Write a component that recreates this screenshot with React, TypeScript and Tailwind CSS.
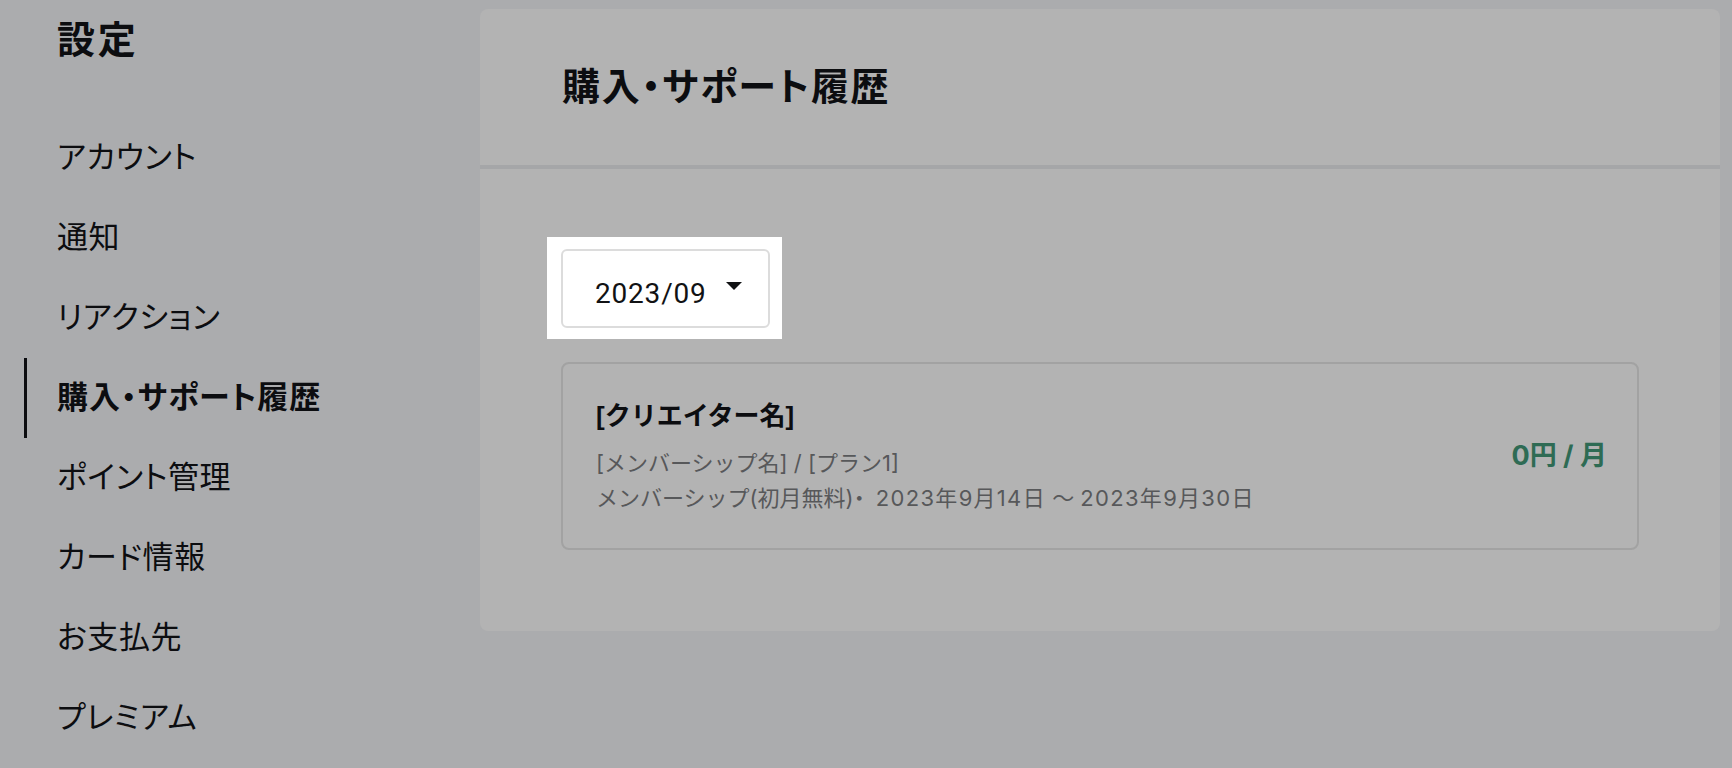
const menuItems = [
  'アカウント',
  '通知',
  'リアクション',
  '購入・サポート履歴',
  'ポイント管理',
  'カード情報',
  'お支払先',
  'プレミアム',
];

const activeItem = '購入・サポート履歴';

function Sidebar() {
  return (
    <aside className="w-[480px] shrink-0 pl-[24px]">
      <div className="flex h-[79px] items-center pl-[33px] text-[38px] font-bold leading-none tracking-[0.07em] text-[#0c0d10] [font-feature-settings:'palt']">
        設定
      </div>
      <nav className="mt-[39px] flex flex-col">
        {menuItems.map((item) => (
          <a
            key={item}
            href="#"
            className={
              item === activeItem
                ? "flex h-[80px] items-center border-l-[3px] border-[#0c0d10] pl-[30px] pt-[1px] text-[31px] font-bold tracking-[1px] text-[#0c0d10] [font-feature-settings:'palt']"
                : "flex h-[80px] items-center border-l-[3px] border-transparent pl-[30px] pt-[1px] text-[31px] tracking-[0.6px] text-[#0c0d10] [font-feature-settings:'palt']"
            }
          >
            {item}
          </a>
        ))}
      </nav>
    </aside>
  );
}

function MonthSelect() {
  return (
    <div className="-mb-[11px] -ml-[14px] -mt-[12px] w-fit bg-white pb-[11px] pl-[14px] pr-[12px] pt-[12px]">
      <button className="flex h-[79px] w-[209px] items-start rounded-[6px] border-2 border-[#dcdcdc] bg-white pl-[32px] pt-[29px]">
        <span className="font-['Roboto',sans-serif] text-[28px] leading-[28px] tracking-[0.8px] text-[#111214]">2023/09</span>
        <svg className="ml-[19px] mt-[2px]" width="16" height="8" viewBox="0 0 16 8">
          <path d="M0 0 H16 L8 8 Z" fill="#111214" />
        </svg>
      </button>
    </div>
  );
}

function HistoryCard() {
  return (
    <div className="mt-[34px] flex h-[188px] items-center justify-between rounded-[8px] border-2 border-[#a2a2a2] pl-[33px] pr-[30px]">
      <div className="pt-[2px]">
        <p className="text-[26px] font-bold leading-[36px] text-[#0c0d10]">[クリエイター名]</p>
        <p className="mt-[12px] font-['Inter','Noto_Sans_CJK_JP',sans-serif] text-[22px] leading-[35px] text-[#57585a]">
          [メンバーシップ名] / [プラン1]
        </p>
        <p className="font-['Inter','Noto_Sans_CJK_JP',sans-serif] text-[22px] leading-[35px] text-[#57585a]">
          メンバーシップ(初月無料)<span className="[font-feature-settings:'palt']">・</span>{' '}
          <span className="ml-[5px] tracking-[1.3px]">2023年9月14日</span> 〜{' '}
          <span className="tracking-[1.3px]">2023年9月30日</span>
        </p>
      </div>
      <p className="font-['Inter','Noto_Sans_CJK_JP',sans-serif] text-[27px] font-bold text-[#2e6b54]">0円 / 月</p>
    </div>
  );
}

export default function App() {
  return (
    <div className="flex min-h-[768px] w-full bg-[#abacae] font-['Liberation_Sans','Noto_Sans_CJK_JP',sans-serif]">
      <Sidebar />
      <main className="mt-[9px] h-[622px] w-[1240px] rounded-[8px] bg-[#b3b3b3]">
        <header className="flex h-[156px] items-center pl-[82px] text-[38px] font-bold tracking-[1.7px] text-[#0c0d10] [font-feature-settings:'palt']">
          購入・サポート履歴
        </header>
        <div className="h-[4px] bg-[#a5a6a8]" />
        <section className="px-[81px] pt-[80px]">
          <MonthSelect />
          <HistoryCard />
        </section>
      </main>
    </div>
  );
}
